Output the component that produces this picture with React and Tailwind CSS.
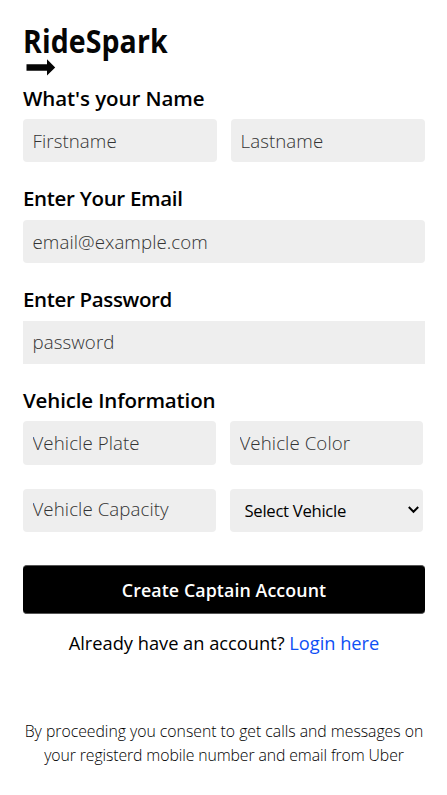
const field =
  'block min-w-0 bg-[#eeeeee] px-[9.5px] text-[18.7px] font-light tracking-[0.08px] text-black outline-none placeholder:text-[#333] placeholder:opacity-100'

function Heading({ children, className }) {
  return (
    <h3 className={'whitespace-nowrap text-[20.5px] leading-[28px] font-semibold ' + className}>
      {children}
    </h3>
  )
}

function Logo() {
  return (
    <div className="h-[56px]">
      <div className="h-[35px] w-max origin-left scale-x-[0.89] whitespace-nowrap text-[32px] leading-[36px] font-bold tracking-[0.1px] text-[#050505]">
        RideSpark
      </div>
      <svg className="ml-[3px] mt-[1px] block" width="30" height="17" viewBox="0 0 30 17" fill="#050505">
        <path d="M0.5 5.2H21V0.2L29.2 8.4L21 16.4V11.8H0.5Z" />
      </svg>
    </div>
  )
}

export default function App() {
  return (
    <div className="h-[795px] w-[447px] overflow-hidden bg-white pl-[23px] pr-[22px] pt-[23px] font-['Open_Sans','Noto_Sans',sans-serif] text-black">
      <Logo />
      <form>
        <Heading className="mt-[5px] tracking-[-0.07px]">What's your Name</Heading>
        <div className="mt-[7px] flex gap-[14px]">
          <input className={field + ' h-[43px] w-[194px] rounded-[4px]'} placeholder="Firstname" />
          <input className={field + ' h-[43px] w-[194px] rounded-[4px]'} placeholder="Lastname" />
        </div>
        <Heading className="mt-[22px] tracking-[-0.32px]">Enter Your Email</Heading>
        <input className={field + ' mt-[8px] h-[43px] w-full rounded-[4px]'} placeholder="email@example.com" />
        <Heading className="mt-[22px] tracking-[-0.35px]">Enter Password</Heading>
        <input className={field + ' mt-[8px] h-[43px] w-full pb-[2px]'} type="password" placeholder="password" />
        <Heading className="mt-[22px] tracking-[-0.15px]">Vehicle Information</Heading>
        <div className="mt-[7px] grid grid-cols-[193px_193px] grid-rows-[44px_43px] gap-x-[14px] gap-y-[24px]">
          <input className={field + ' rounded-[4px]'} placeholder="Vehicle Plate" />
          <input className={field + ' rounded-[4px]'} placeholder="Vehicle Color" />
          <input className={field + ' rounded-[4px] pb-[2px]'} placeholder="Vehicle Capacity" />
          <div className="relative h-[43px]">
            <select className="h-full w-full appearance-none rounded-[4px] bg-[#eeeeee] pl-[14.5px] text-[16.7px] tracking-[-0.3px]">
              <option>Select Vehicle</option>
            </select>
            <svg
              className="pointer-events-none absolute right-[3px] top-[16px]"
              width="13"
              height="10"
              viewBox="0 0 13 10"
              fill="none"
              stroke="#000"
              strokeWidth="2"
            >
              <path d="M1.8 2L6.5 6.8L11.2 2" />
            </svg>
          </div>
        </div>
        <button
          type="button"
          className="mt-[33px] block h-[49px] w-full rounded-[4px] border-y border-[#555] bg-black pt-[2px] text-[17.8px] font-semibold tracking-[0.1px] text-white"
        >
          Create Captain Account
        </button>
      </form>
      <p className="mt-[15px] whitespace-nowrap text-center text-[18.3px] leading-[27px] tracking-[-0.02px]">
        Already have an account? <a className="text-[#0f50f5]">Login here</a>
      </p>
      <p className="-mx-[10px] mt-[63px] whitespace-nowrap text-center text-[15.8px] leading-[24px] font-light tracking-[-0.02px]">
        By proceeding you consent to get calls and messages on
        <br />
        <span className="tracking-[-0.1px]">your registerd mobile number and email from Uber</span>
      </p>
    </div>
  )
}
